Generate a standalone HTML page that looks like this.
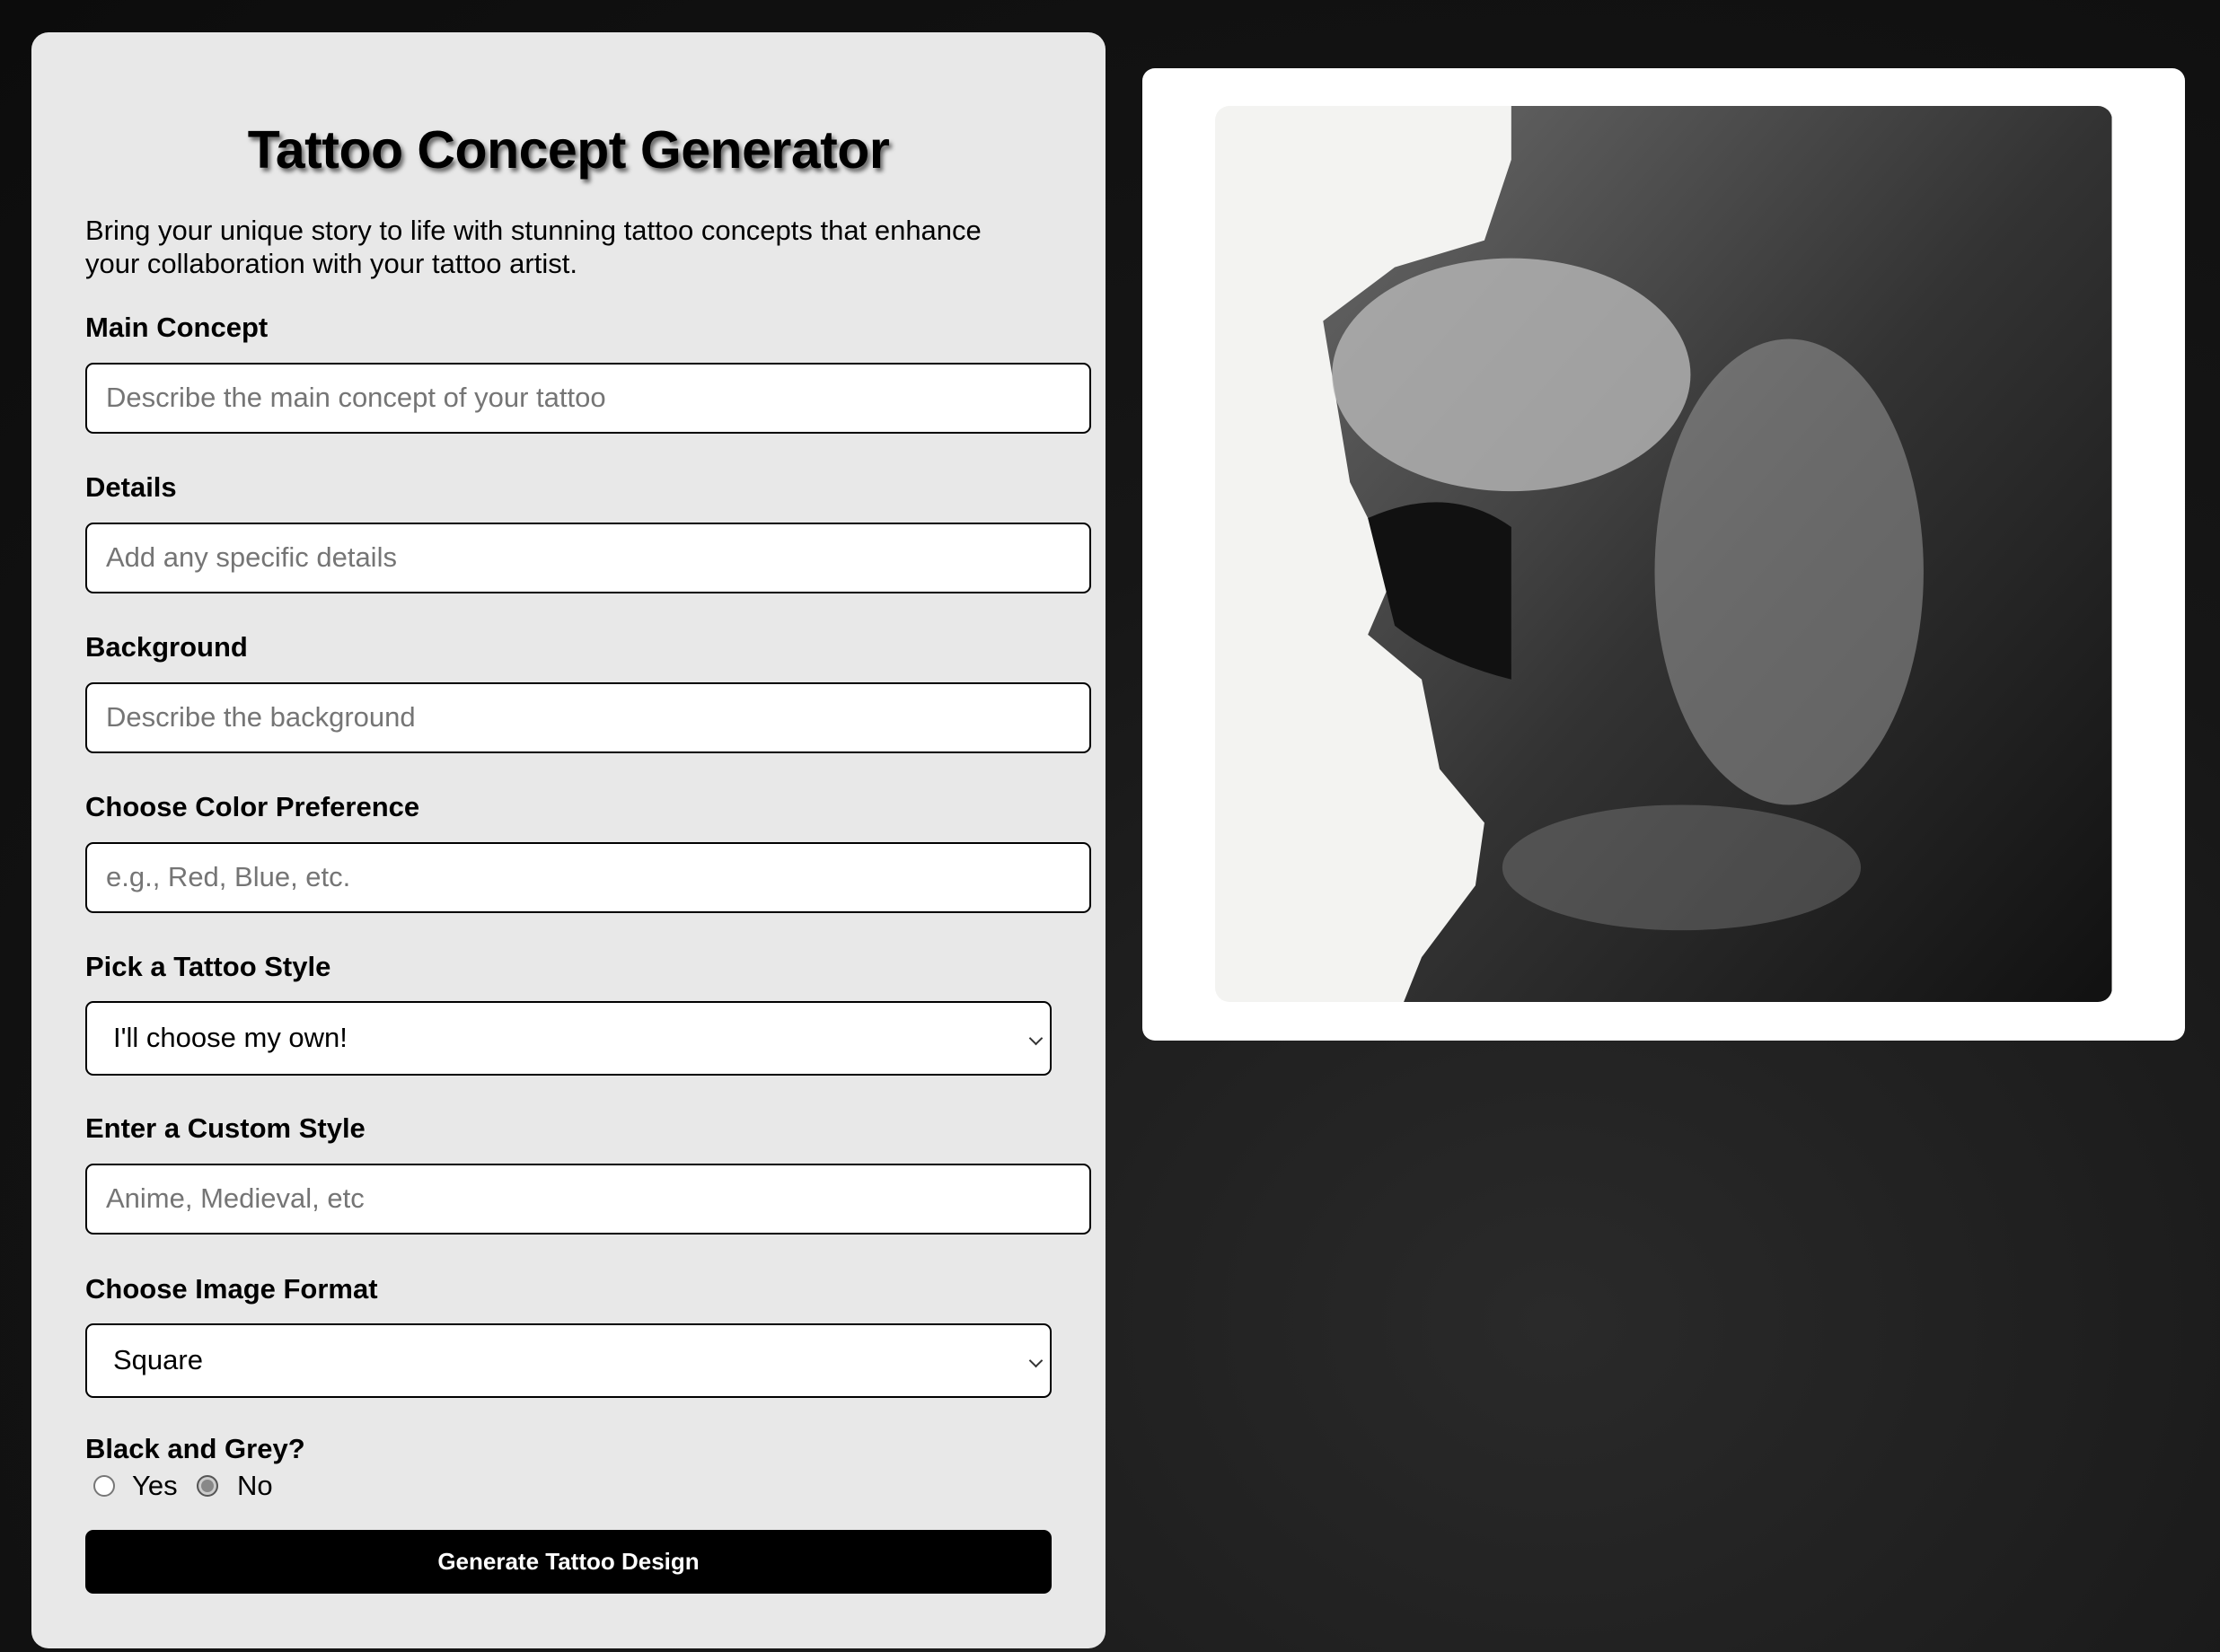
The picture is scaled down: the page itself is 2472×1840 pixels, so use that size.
<!DOCTYPE html>
<html><head><meta charset="utf-8"><style>
*{box-sizing:border-box;margin:0;padding:0}
html,body{width:2472px;height:1840px;overflow:hidden}
body{background:radial-gradient(ellipse at 70% 80%,#2a2a2a 0%,#161616 45%,#0c0c0c 100%);font-family:"Liberation Sans",Arial,sans-serif;position:relative}
.panel{position:absolute;left:35px;top:36px;width:1196px;height:1800px;background:#e8e8e8;border-radius:19px}
h1{position:absolute;left:0;width:1196px;top:97px;text-align:center;font-size:59px;font-weight:bold;color:#000;text-shadow:3px 4px 5px rgba(0,0,0,.55);letter-spacing:-0.5px}
.intro{position:absolute;left:60px;top:202px;width:1040px;font-size:31px;line-height:37px;color:#000}
.lbl{position:absolute;left:60px;font-size:31px;font-weight:bold;color:#000}
.inp{position:absolute;left:60px;width:1120px;height:79px;background:#fff;border:2.5px solid #000;border-radius:9px;font-size:31px;color:#757575;padding-left:21px;line-height:74px}
.sel{width:1076px;height:83px;color:#000;padding-left:29px;line-height:78px}
.sel:after{content:"";position:absolute;right:10px;top:34px;width:9px;height:9px;border-right:2px solid #333;border-bottom:2px solid #333;transform:rotate(45deg)}
.radio{position:absolute;top:1601px;font-size:31px;color:#000}
.rb{position:absolute;top:1607px;width:24px;height:24px;border-radius:50%;border:2px solid #777;background:#fff}
.btn{position:absolute;left:60px;top:1668px;width:1076px;height:71px;background:#000;border-radius:9px;color:#fff;font-weight:bold;font-size:26px;text-align:center;line-height:71px}
.card{position:absolute;left:1272px;top:76px;width:1161px;height:1083px;background:#fff;border-radius:14px}
.img{position:absolute;left:81px;top:42px;width:999px;height:998px;border-radius:16px;overflow:hidden;background:#f3f3f1}
</style></head><body>
<div class="panel">
<h1>Tattoo Concept Generator</h1>
<div class="intro">Bring your unique story to life with stunning tattoo concepts that enhance your collaboration with your tattoo artist.</div>
<div class="lbl" style="top:311px">Main Concept</div>
<div class="inp" style="top:368px">Describe the main concept of your tattoo</div>
<div class="lbl" style="top:489px">Details</div>
<div class="inp" style="top:546px">Add any specific details</div>
<div class="lbl" style="top:667px">Background</div>
<div class="inp" style="top:724px">Describe the background</div>
<div class="lbl" style="top:845px">Choose Color Preference</div>
<div class="inp" style="top:902px">e.g., Red, Blue, etc.</div>
<div class="lbl" style="top:1023px">Pick a Tattoo Style</div>
<div class="inp sel" style="top:1079px">I'll choose my own!</div>
<div class="lbl" style="top:1203px">Enter a Custom Style</div>
<div class="inp" style="top:1260px">Anime, Medieval, etc</div>
<div class="lbl" style="top:1382px">Choose Image Format</div>
<div class="inp sel" style="top:1438px">Square</div>
<div class="lbl" style="top:1560px">Black and Grey?</div>
<div class="rb" style="left:69px"></div>
<div class="radio" style="left:112px">Yes</div>
<div class="rb" style="left:184px;background:#888;border-color:#555;box-shadow:inset 0 0 0 3px #ccc"></div>
<div class="radio" style="left:229px">No</div>
<div class="btn">Generate Tattoo Design</div>
</div>
<div class="card"><div class="img">
<svg width="999" height="998" viewBox="0 0 1000 1000">
<defs><linearGradient id="g" x1="0" y1="0" x2="1" y2="1"><stop offset="0" stop-color="#6a6a6a"/><stop offset=".5" stop-color="#333"/><stop offset="1" stop-color="#111"/></linearGradient></defs>
<path d="M330,0 L1000,0 L1000,1000 L210,1000 L230,950 L290,870 L300,800 L250,740 L230,640 L170,590 L200,520 L150,420 L120,240 L200,180 L300,150 L330,60 Z" fill="url(#g)"/>
<ellipse cx="330" cy="300" rx="200" ry="130" fill="#b8b8b8" opacity=".8"/>
<ellipse cx="640" cy="520" rx="150" ry="260" fill="#999" opacity=".55"/>
<ellipse cx="520" cy="850" rx="200" ry="70" fill="#888" opacity=".4"/>
<path d="M170,460 Q260,420 330,470 L330,640 Q250,620 200,580 Z" fill="#111"/>
</svg>
</div></div>
</body></html>
